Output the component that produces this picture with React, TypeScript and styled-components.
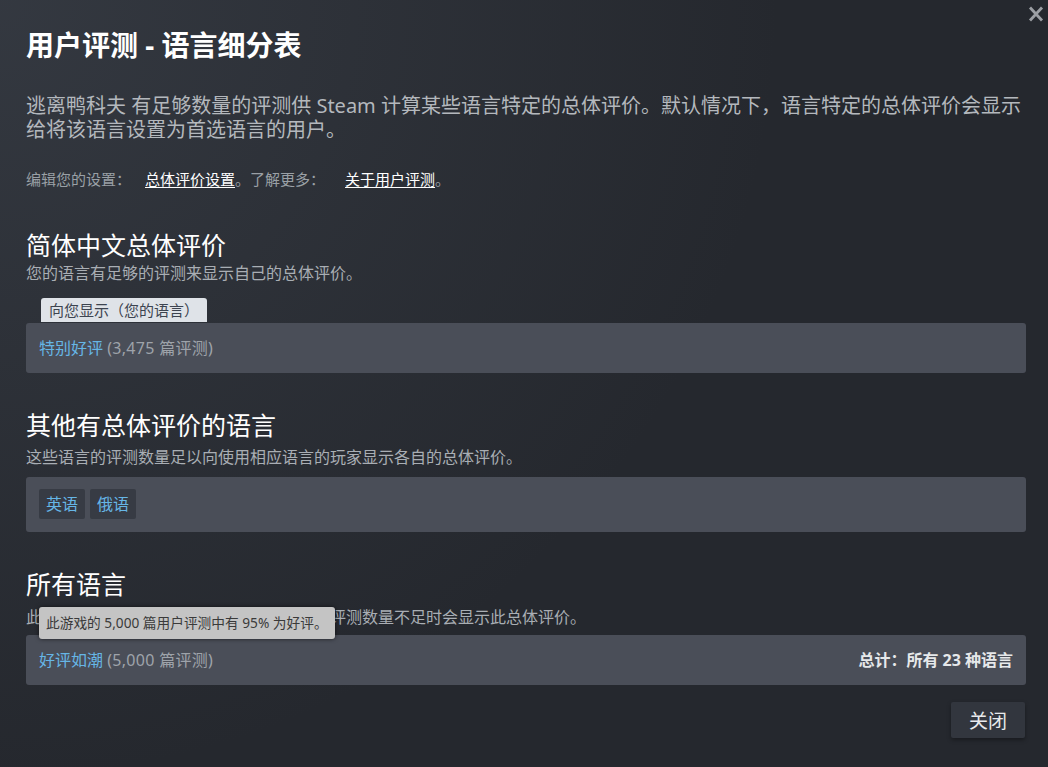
import React from 'react'
import styled, { createGlobalStyle } from 'styled-components'

const GlobalStyle = createGlobalStyle`
  html, body {
    margin: 0;
    padding: 0;
    background: #25282e;
  }
  body {
    font-family: "Noto Sans", "Noto Sans CJK SC", sans-serif;
  }
`

const Modal = styled.div`
  position: relative;
  box-sizing: border-box;
  min-height: 100vh;
  padding: 28px 22px 20px 26px;
  background: radial-gradient(circle at top left, rgba(74, 81, 92, 0.4) 0%, rgba(75, 81, 92, 0) 60%), #25282e;
  color: #acb2b8;
`

const CloseX = styled.button`
  position: absolute;
  top: 6px;
  right: 4px;
  width: 16px;
  height: 16px;
  padding: 0;
  border: none;
  background: none;
  cursor: pointer;
  display: flex;
`

const Title = styled.h1`
  margin: 0;
  font-size: 28px;
  line-height: 34px;
  font-weight: 700;
  color: #ffffff;
`

const Description = styled.p`
  margin: 32px 0 0;
  font-size: 20px;
  line-height: 24px;
  color: #b4b8bd;
`

const SettingsLine = styled.div`
  margin-top: 27px;
  font-size: 15px;
  line-height: 20px;
  color: #9aa0a6;
`

const TextLink = styled.a<{ far?: boolean }>`
  color: #ffffff;
  text-decoration: underline;
  text-underline-offset: 2px;
  margin-left: ${p => (p.far ? '20px' : '14px')};
  cursor: pointer;
`

const Section = styled.section<{ first?: boolean }>`
  margin-top: ${p => (p.first ? '41px' : '37px')};
`

const Heading = styled.h2`
  margin: 0;
  font-size: 25px;
  line-height: 30px;
  font-weight: 400;
  color: #ffffff;
`

const SubText = styled.div<{ gap: number }>`
  margin-top: ${p => p.gap}px;
  font-size: 16px;
  line-height: 20px;
  color: #a9aeb4;
`

const Flag = styled.div`
  display: inline-block;
  margin: 15px 0 1px 15px;
  padding: 0 8px;
  height: 24px;
  line-height: 24px;
  font-size: 15px;
  color: #3d4450;
  background: #dfe3e8;
  border-radius: 3px 3px 0 0;
`

const Panel = styled.div<{ gap?: number }>`
  position: relative;
  box-sizing: border-box;
  margin-top: ${p => (p.gap ?? 0)}px;
  display: flex;
  align-items: center;
  justify-content: space-between;
  min-height: 50px;
  padding: 13px 13px;
  background: #4a4e58;
  border-radius: 3px;
  font-size: 16px;
  line-height: 24px;
`

const TagPanel = styled(Panel)`
  justify-content: flex-start;
  gap: 5px;
  padding: 12px 13px 13px;
`

const Tag = styled.span`
  display: inline-flex;
  align-items: center;
  height: 30px;
  padding: 0 7px;
  background: #373b44;
  border-radius: 2px;
  font-size: 16px;
  color: #66b6e6;
`

const Rating = styled.span`
  color: #66b6e6;
`

const Count = styled.span`
  color: #9ea3aa;
  letter-spacing: 0.3px;
`

const Total = styled.span`
  font-size: 16px;
  font-weight: 700;
  color: #e6e8ea;
`

const HoverTip = styled.div`
  position: absolute;
  left: 13px;
  top: -28px;
  padding: 0 7px;
  height: 32px;
  line-height: 32px;
  font-size: 13.7px;
  color: #3a3a3a;
  background: #c4c4c4;
  border-radius: 3px;
  box-shadow: 0 0 4px rgba(0, 0, 0, 0.6);
  white-space: nowrap;
`

const Footer = styled.div`
  display: flex;
  justify-content: flex-end;
  margin-top: 17px;
  padding-right: 1px;
`

const CloseButton = styled.button`
  height: 36px;
  padding: 0 18px;
  border: none;
  border-radius: 2px;
  background: #32363e;
  color: #e8eaec;
  font-family: inherit;
  font-size: 19px;
  box-shadow: 0 2px 4px rgba(0, 0, 0, 0.35);
  cursor: pointer;
`

export default function App() {
  return (
    <>
      <GlobalStyle />
      <Modal>
        <CloseX aria-label="关闭">
          <svg width="16" height="16" viewBox="0 0 16 16">
            <path d="M2 1.5 L14 14.5 M14 1.5 L2 14.5" stroke="#9c9fa4" strokeWidth="2.8" strokeLinecap="butt" />
          </svg>
        </CloseX>

        <Title>用户评测 - 语言细分表</Title>

        <Description>
          逃离鸭科夫 有足够数量的评测供 Steam 计算某些语言特定的总体评价。默认情况下，语言特定的总体评价会显示给将该语言设置为首选语言的用户。
        </Description>

        <SettingsLine>
          编辑您的设置：<TextLink>总体评价设置</TextLink>。了解更多：<TextLink far>关于用户评测</TextLink>。
        </SettingsLine>

        <Section first>
          <Heading>简体中文总体评价</Heading>
          <SubText gap={3}>您的语言有足够的评测来显示自己的总体评价。</SubText>
          <Flag>向您显示（您的语言）</Flag>
          <Panel>
            <div>
              <Rating>特别好评</Rating> <Count>(3,475 篇评测)</Count>
            </div>
          </Panel>
        </Section>

        <Section>
          <Heading>其他有总体评价的语言</Heading>
          <SubText gap={7}>这些语言的评测数量足以向使用相应语言的玩家显示各自的总体评价。</SubText>
          <TagPanel gap={10}>
            <Tag>英语</Tag>
            <Tag>俄语</Tag>
          </TagPanel>
        </Section>

        <Section>
          <Heading>所有语言</Heading>
          <SubText gap={8}>此总体评价基于所有语言评测，在您的语言评测数量不足时会显示此总体评价。</SubText>
          <Panel gap={8}>
            <HoverTip>此游戏的 5,000 篇用户评测中有 95% 为好评。</HoverTip>
            <div>
              <Rating>好评如潮</Rating> <Count>(5,000 篇评测)</Count>
            </div>
            <Total>总计：所有 23 种语言</Total>
          </Panel>
        </Section>

        <Footer>
          <CloseButton>关闭</CloseButton>
        </Footer>
      </Modal>
    </>
  )
}
